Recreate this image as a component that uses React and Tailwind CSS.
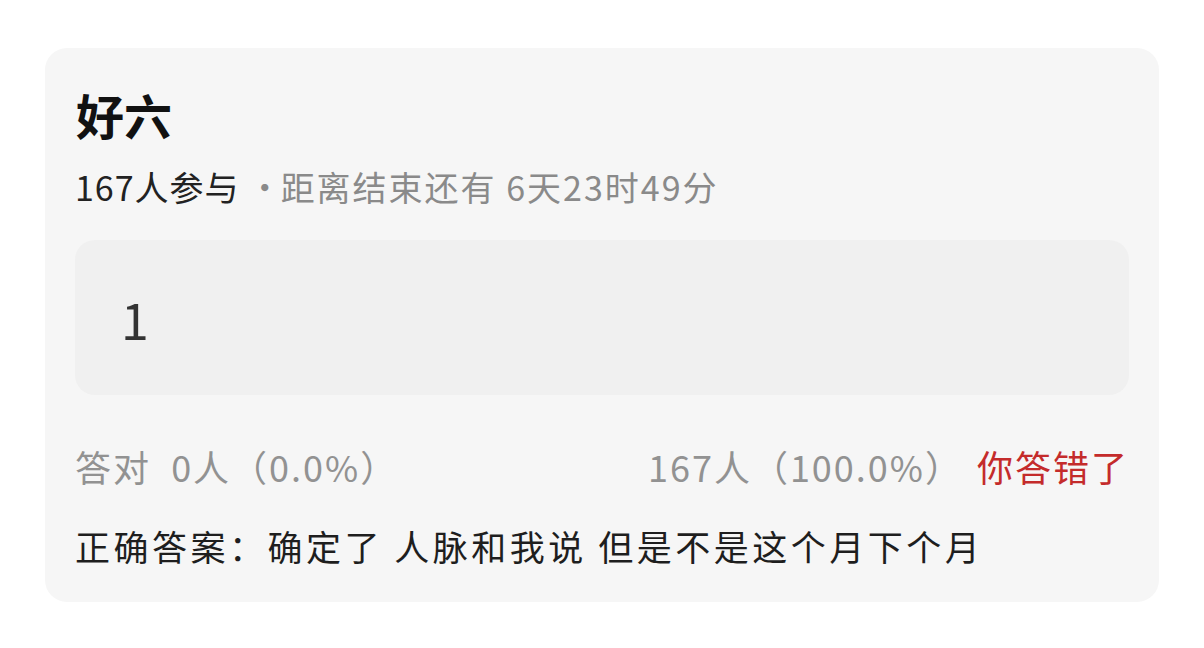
export default function App() {
  const font = { fontFamily: '"Noto Sans CJK SC", "Noto Sans", sans-serif' };
  return (
    <div className="w-[1204px] h-[648px] bg-white pt-[48px] pl-[45px]" style={font}>
      <div className="w-[1114px] h-[554px] bg-[#f6f6f6] rounded-[22px] pt-[30px] px-[30px]">
        <div className="text-[48px] leading-[72px] font-bold text-[#111] pl-[1px]">好六</div>
        <div className="mt-[12px] text-[34px] leading-[50px] tracking-[1px] text-[#8a8a8a]">
          <span className="text-[#222]">167人参与</span>
          <span className="ml-[8px] mr-[-2px]">·</span>
          <span className="tracking-[2px]">距离结束还有 6天23时49分</span>
        </div>
        <div className="mt-[28px] h-[155px] bg-[#f0f0f0] rounded-[20px] flex items-center pl-[46px]">
          <span className="text-[50px] leading-none text-[#333]">1</span>
        </div>
        <div className="mt-[46px] flex items-center justify-between text-[36px] leading-[50px] tracking-[2px] text-[#929292]">
          <span>答对&nbsp;&nbsp;0人（0.0%）</span>
          <span>
            167人（100.0%）<span className="ml-[14px] text-[#c42b2b]">你答错了</span>
          </span>
        </div>
        <div className="mt-[30px] text-[35px] leading-[50px] tracking-[3.5px] text-[#1e1e1e]">
          正确答案：确定了 人脉和我说 但是不是这个月下个月
        </div>
      </div>
    </div>
  );
}
